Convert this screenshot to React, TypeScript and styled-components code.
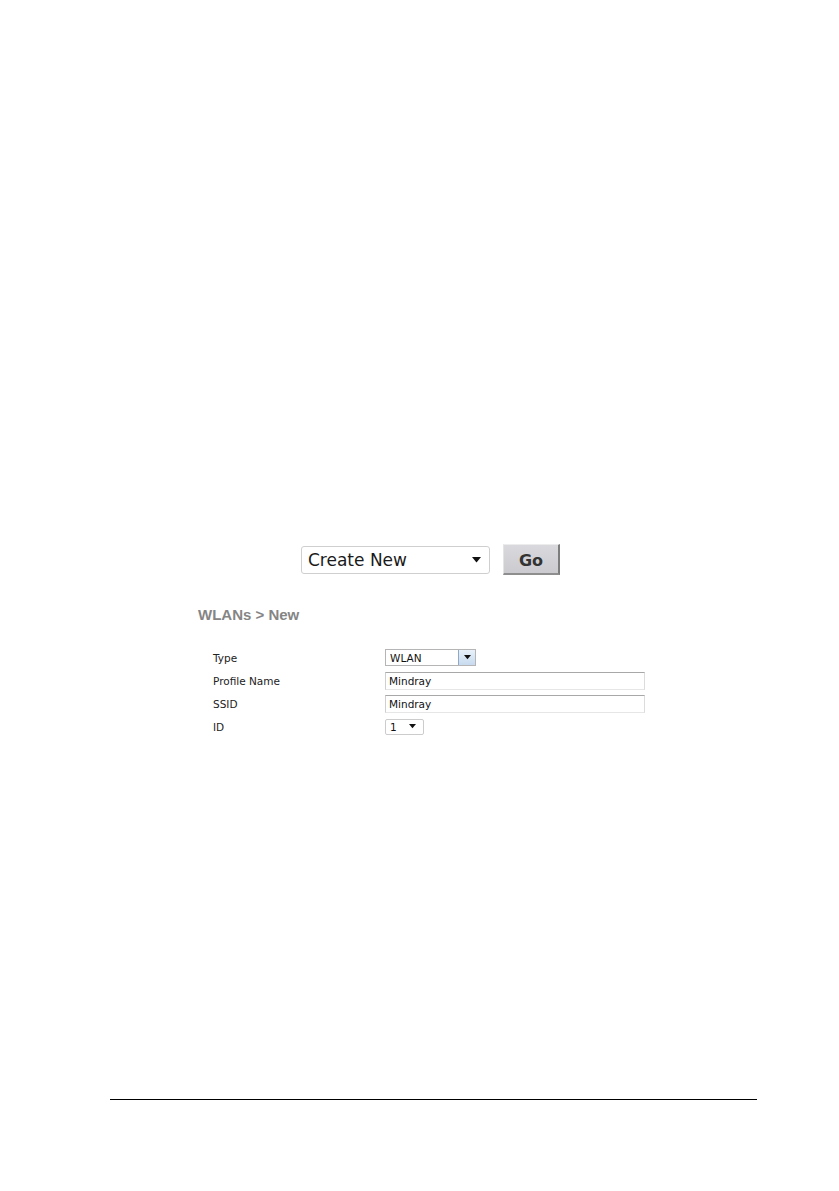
import React from "react";
import styled, { createGlobalStyle } from "styled-components";

const GlobalStyle = createGlobalStyle`
  html, body {
    margin: 0;
    padding: 0;
    background: #ffffff;
  }
`;

const FIELDS = [
  { label: "Type", kind: "type", value: "WLAN" },
  { label: "Profile Name", kind: "text", value: "Mindray" },
  { label: "SSID", kind: "text", value: "Mindray" },
  { label: "ID", kind: "id", value: "1" },
];

function Caret({ size = 9 }: { size?: number }) {
  return (
    <svg width={size} height={size * 0.6} viewBox="0 0 10 6">
      <path d="M0 0 L10 0 L5 6 Z" fill="#111" />
    </svg>
  );
}

export default function App() {
  return (
    <Page>
      <GlobalStyle />
      <Content>
        <ActionRow>
          <BigSelect>
            <span>Create New</span>
            <Caret size={9} />
          </BigSelect>
          <GoButton>Go</GoButton>
        </ActionRow>

        <Title>WLANs &gt; New</Title>

        <Form>
          {FIELDS.map((field) => (
            <FormRow key={field.label}>
              <Label>{field.label}</Label>
              {field.kind === "type" && (
                <TypeSelect>
                  <SelectText>{field.value}</SelectText>
                  <DropButton>
                    <Caret size={7} />
                  </DropButton>
                </TypeSelect>
              )}
              {field.kind === "text" && <TextInput>{field.value}</TextInput>}
              {field.kind === "id" && (
                <IdSelect>
                  <SelectText>{field.value}</SelectText>
                  <Caret size={7} />
                </IdSelect>
              )}
            </FormRow>
          ))}
        </Form>
      </Content>

      <FooterRule />
    </Page>
  );
}

const Page = styled.div`
  width: 839px;
  height: 1191px;
  display: flex;
  flex-direction: column;
  background: #ffffff;
`;

const Content = styled.div`
  padding-top: 544px;
  height: 555px;
  display: flex;
  flex-direction: column;
`;

const ActionRow = styled.div`
  display: flex;
  align-items: center;
  gap: 13px;
  padding-left: 301px;
  height: 31px;
`;

const BigSelect = styled.div`
  box-sizing: border-box;
  width: 189px;
  height: 28px;
  border: 1px solid #cfcfcf;
  border-radius: 3px;
  background: #ffffff;
  display: flex;
  align-items: center;
  justify-content: space-between;
  padding: 1px 8px 0 6px;
  font-family: "DejaVu Sans", Verdana, sans-serif;
  font-size: 17px;
  color: #1a1a1a;
`;

const GoButton = styled.div`
  box-sizing: border-box;
  width: 57px;
  height: 31px;
  padding-top: 2px;
  background: linear-gradient(#d9d9dd, #cbcbcf);
  border-top: 1px solid #ececec;
  border-left: 1px solid #e4e4e4;
  border-right: 2px solid #7d7d7d;
  border-bottom: 2px solid #8e8e8e;
  display: flex;
  align-items: center;
  justify-content: center;
  font-family: "DejaVu Sans", Verdana, sans-serif;
  font-weight: bold;
  font-size: 16px;
  color: #333333;
`;

const Title = styled.div`
  margin: 31px 0 0 198px;
  font-family: "Liberation Sans", Arial, sans-serif;
  font-weight: bold;
  font-size: 15px;
  line-height: 17px;
  color: #858585;
`;

const Form = styled.div`
  margin: 23px 0 0 213px;
  display: flex;
  flex-direction: column;
`;

const FormRow = styled.div`
  display: grid;
  grid-template-columns: 172px auto;
  align-items: center;
  height: 23px;
`;

const Label = styled.div`
  font-family: "DejaVu Sans", Verdana, sans-serif;
  font-size: 10.5px;
  color: #222222;
`;

const SelectText = styled.span`
  font-family: "DejaVu Sans", Verdana, sans-serif;
  font-size: 10.5px;
  color: #111111;
`;

const TypeSelect = styled.div`
  box-sizing: border-box;
  width: 91px;
  height: 17px;
  border: 1px solid #b5b5b5;
  background: #ffffff;
  display: flex;
  align-items: center;
  justify-content: space-between;
  padding-left: 4px;
`;

const DropButton = styled.div`
  box-sizing: border-box;
  width: 17px;
  height: 15px;
  border-left: 1px solid #8fa9c7;
  background: linear-gradient(#e8f1fa, #c7dbef);
  display: flex;
  align-items: center;
  justify-content: center;
`;

const TextInput = styled.div`
  box-sizing: border-box;
  width: 260px;
  height: 18px;
  border-top: 1px solid #a8a8a8;
  border-left: 1px solid #cfcfcf;
  border-right: 1px solid #dcdcdc;
  border-bottom: 1px solid #e6e6e6;
  display: flex;
  align-items: center;
  padding-left: 3px;
  font-family: "DejaVu Sans", Verdana, sans-serif;
  font-size: 10.5px;
  color: #111111;
`;

const IdSelect = styled.div`
  box-sizing: border-box;
  width: 39px;
  height: 16px;
  border: 1px solid #cccccc;
  border-radius: 2px;
  background: #ffffff;
  display: flex;
  align-items: center;
  justify-content: space-between;
  padding: 0 7px 0 4px;
`;

const FooterRule = styled.div`
  margin: 0 82px 0 110px;
  height: 1px;
  background: #000000;
`;
